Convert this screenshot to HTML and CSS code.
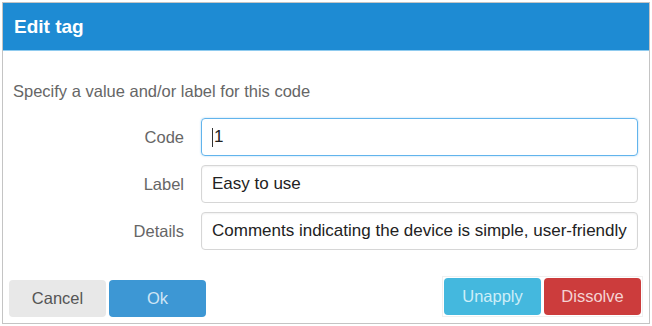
FILE: index.html
```html
<!DOCTYPE html>
<html lang="en">
<head>
  <meta charset="UTF-8">
  <title>Edit tag</title>
  <link rel="stylesheet" href="styles.css">
</head>
<body>
  <div class="dialog">
    <div class="dialog-header">Edit tag</div>

    <div class="dialog-body">
      <p class="intro">Specify a value and/or label for this code</p>

      <div class="form-row">
        <label class="form-label">Code</label>
        <div class="form-input focused"><span class="caret"></span>1</div>
      </div>
      <div class="form-row">
        <label class="form-label">Label</label>
        <div class="form-input">Easy to use</div>
      </div>
      <div class="form-row">
        <label class="form-label">Details</label>
        <div class="form-input">Comments indicating the device is simple, user-friendly</div>
      </div>
    </div>

    <div class="dialog-footer">
      <div class="btn-group">
        <button class="btn btn-cancel">Cancel</button>
        <button class="btn btn-ok">Ok</button>
      </div>
      <div class="btn-group outlined">
        <button class="btn btn-unapply">Unapply</button>
        <button class="btn btn-dissolve">Dissolve</button>
      </div>
    </div>
  </div>
</body>
</html>
```

FILE: styles.css
```css
/* Global Styles */
* {
  margin: 0;
  padding: 0;
  box-sizing: border-box;
  font-family: 'Liberation Sans', Arial, sans-serif;
}

body {
  background: #ffffff;
  width: 652px;
  height: 326px;
  overflow: hidden;
}

/* Dialog frame */
.dialog {
  margin: 2px 0 0 2px;
  width: 648px;
  height: 322px;
  border: 1px solid #c4c4c4;
  background: #fff;
  display: flex;
  flex-direction: column;
}

.dialog-header {
  height: 48px;
  background: #1e8bd3;
  border-bottom: 1px solid #8fcbef;
  color: #fff;
  font-size: 19px;
  font-weight: bold;
  padding: 0 11px;
  display: flex;
  align-items: center;
}

/* Body */
.dialog-body {
  padding: 30px 10px 0 10px;
  display: flex;
  flex-direction: column;
  gap: 9px;
}

.intro {
  color: #666;
  font-size: 16.5px;
  line-height: 20px;
  margin-bottom: 8px;
}

.form-row {
  display: flex;
  align-items: center;
  gap: 17px;
}

.form-label {
  width: 171px;
  text-align: right;
  color: #666;
  font-size: 16.5px;
}

.form-input {
  width: 437px;
  height: 38px;
  border: 1px solid #d6d6d6;
  border-radius: 4px;
  box-shadow: inset 0 1px 2px rgba(0, 0, 0, 0.06);
  padding: 0 10px;
  display: flex;
  align-items: center;
  color: #222;
  font-size: 17px;
  white-space: nowrap;
  overflow: hidden;
}

.form-input.focused {
  border-color: #62b4ec;
  box-shadow: 0 0 2px rgba(98, 180, 236, 0.6);
}

.caret {
  display: inline-block;
  width: 1px;
  height: 19px;
  background: #333;
  margin-right: 1px;
}

/* Footer */
.dialog-footer {
  margin-top: auto;
  padding: 0 6px 6px 6px;
  display: flex;
  justify-content: space-between;
  align-items: flex-end;
}

.btn-group {
  display: flex;
  gap: 3px;
}

.btn-group.outlined {
  border: 1px solid #f0f0f0;
  padding: 1px;
}

.btn {
  width: 97px;
  height: 37px;
  border: none;
  border-radius: 4px;
  font-size: 16.5px;
  cursor: pointer;
}

.btn-cancel {
  background: #e8e8e8;
  color: #555;
}

.btn-ok {
  background: #3d97d4;
  color: #cfe5f5;
}

.btn-unapply {
  background: #44b8de;
  color: #cdeef8;
}

.btn-dissolve {
  background: #cc3c3c;
  color: #f4d3d3;
}
```
